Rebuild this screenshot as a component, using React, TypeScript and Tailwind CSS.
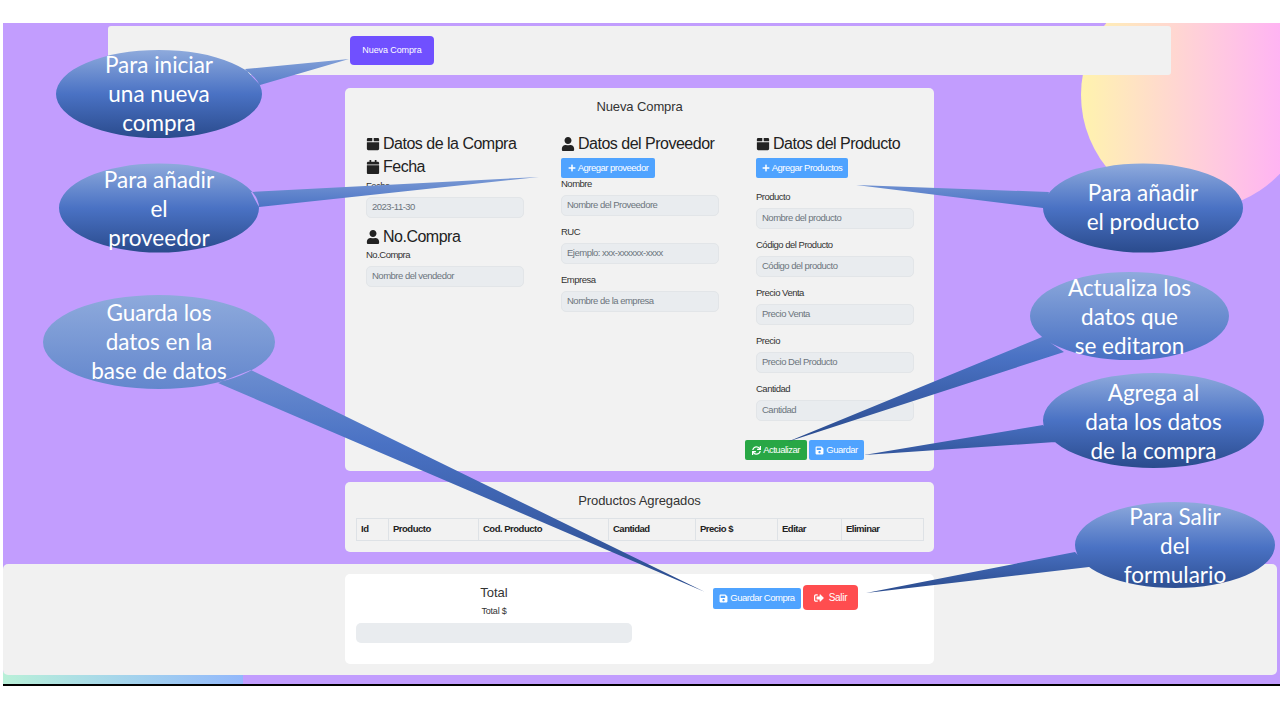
import { FaCalendar, FaPlus, FaSave, FaSignOutAlt, FaSync, FaUser } from 'react-icons/fa';
import type { ReactNode } from 'react';

const callouts = [
  {
    d: 'M56 94a103 44 0 1 0 206 0a103 44 0 1 0 -206 0zM245 69L349 59L260 85z',
    box: 'left-[56px] top-[50px] w-[206px]',
    lines: ['Para iniciar', 'una nueva', 'compra'],
  },
  {
    d: 'M59 208a100 44.500 0 1 0 200 0a100 44.500 0 1 0 -200 0zM251 192L539 177L259 207z',
    box: 'left-[59px] top-[165px] w-[200px]',
    lines: ['Para añadir', 'el', 'proveedor'],
  },
  {
    d: 'M43 342a116 47 0 1 0 232 0a116 47 0 1 0 -232 0zM251 370L705 592L218 383z',
    box: 'left-[43px] top-[298px] w-[232px]',
    lines: ['Guarda los', 'datos en la', 'base de datos'],
  },
  {
    d: 'M1043 208a100 44.500 0 1 0 200 0a100 44.500 0 1 0 -200 0zM1049 192L856 185L1043 208z',
    box: 'left-[1043px] top-[178px] w-[200px]',
    lines: ['Para añadir', 'el producto'],
  },
  {
    d: 'M1030 316a99.500 44 0 1 0 199 0a99.500 44 0 1 0 -199 0zM1042 337L787 442L1064 352z',
    box: 'left-[1031px] top-[273px] w-[197px]',
    lines: ['Actualiza los', 'datos que', 'se editaron'],
  },
  {
    d: 'M1043 420.500a110.500 47.500 0 1 0 221 0a110.500 47.500 0 1 0 -221 0zM1043 425L864 455L1055 442z',
    box: 'left-[1043px] top-[378px] w-[221px]',
    lines: ['Agrega al', 'data los datos', 'de la compra'],
  },
  {
    d: 'M1075 545a100 43 0 1 0 200 0a100 43 0 1 0 -200 0zM1075 552L866 593L1089 567z',
    box: 'left-[1075px] top-[502px] w-[200px]',
    lines: ['Para Salir', 'del', 'formulario'],
  },
];

function BoxIcon() {
  return (
    <svg viewBox="0 0 16 16" width="14" height="14" fill="currentColor">
      <path d="M2.500 1h4.700v3.800H1V2.500A1.500 1.500 0 0 1 2.500 1zM8.800 1h4.700A1.500 1.500 0 0 1 15 2.500v2.300H8.800zM1 6h14v7.500a1.500 1.500 0 0 1-1.500 1.500h-11A1.500 1.500 0 0 1 1 13.500z" />
    </svg>
  );
}

function Field({ label, placeholder, value }: { label: string; placeholder?: string; value?: string }) {
  return (
    <div className="w-[158px]">
      <label className="block h-[12px] text-[9.500px] leading-[12px] tracking-[-0.5px] text-[#333]">{label}</label>
      <div className="mt-[5px] flex h-[21px] items-center rounded-[5px] border border-[#e2e5e8] bg-[#e9ecef] px-[5px] text-[9.500px] tracking-[-0.5px] text-[#6c757d]">
        {value ?? placeholder}
      </div>
    </div>
  );
}

function Heading({ icon, children }: { icon: ReactNode; children: ReactNode }) {
  return (
    <h3 className="flex h-[23px] items-center gap-[3px] text-[16px] tracking-[-0.5px] text-[#222]">
      <span className="text-[14px]">{icon}</span>
      {children}
    </h3>
  );
}

function Btn({ className, children }: { className: string; children: ReactNode }) {
  return (
    <button
      type="button"
      className={`flex items-center justify-center gap-[2px] whitespace-nowrap rounded-[2px] text-[9.500px] font-medium tracking-[-0.5px] text-white ${className}`}
    >
      {children}
    </button>
  );
}

const columns = [
  ['Id', 'w-[32px]'],
  ['Producto', 'w-[90px]'],
  ['Cod. Producto', 'w-[130px]'],
  ['Cantidad', 'w-[87px]'],
  ['Precio $', 'w-[82px]'],
  ['Editar', 'w-[64px]'],
  ['Eliminar', 'flex-1'],
];

export default function App() {
  return (
    <div className="relative h-[720px] w-[1280px] overflow-hidden bg-white pl-[3px] pt-[23px] font-['Liberation_Sans',sans-serif]">
      <div className="relative h-[663px] w-[1277px] overflow-hidden border-b-2 border-black bg-[#c29dfe] pt-[3px]">
        <div className="absolute left-[1078px] top-[-43px] h-[230px] w-[230px] rounded-full bg-gradient-to-r from-[#fff3ad] to-[#ffa8fb]" />
        <div className="absolute bottom-0 left-0 h-[12px] w-[240px] bg-gradient-to-r from-[#b9f0d8] to-[#93b8fb]" />

        <header className="relative ml-[105px] flex h-[49px] w-[1063px] items-center rounded-[3px] bg-[#f1f1f1] pl-[242px]">
          <button type="button" className="h-[29px] w-[84px] rounded-[4px] bg-[#7050ff] text-[9px] font-medium tracking-[-0.1px] text-white">
            Nueva Compra
          </button>
        </header>

        <section className="relative ml-[342px] mt-[13px] h-[383px] w-[589px] rounded-[5px] bg-[#f2f2f2] px-[21px] pt-[10px]">
          <h2 className="h-[17px] text-center text-[13px] leading-[17px] tracking-[-0.1px] text-[#333]">Nueva Compra</h2>
          <div className="mt-[17px] grid grid-cols-[195px_195px_158px]">
            <div>
              <Heading icon={<BoxIcon />}>Datos de la Compra</Heading>
              <Heading icon={<FaCalendar />}>Fecha</Heading>
              <div className="mt-[2px]">
                <Field label="Fecha" value="2023-11-30" />
              </div>
              <div className="mt-[7px]">
                <Heading icon={<FaUser />}>No.Compra</Heading>
              </div>
              <div className="mt-[1px]">
                <Field label="No.Compra" placeholder="Nombre del vendedor" />
              </div>
            </div>
            <div>
              <Heading icon={<FaUser />}>Datos del Proveedor</Heading>
              <Btn className="mt-[3px] h-[20px] w-[94px] bg-[#4fa3ff]">
                <FaPlus className="text-[8px]" />
                Agregar proveedor
              </Btn>
              <div className="flex flex-col gap-[10px]">
                <Field label="Nombre" placeholder="Nombre del Proveedore" />
                <Field label="RUC" placeholder="Ejemplo: xxx-xxxxxx-xxxx" />
                <Field label="Empresa" placeholder="Nombre de la empresa" />
              </div>
            </div>
            <div>
              <Heading icon={<BoxIcon />}>Datos del Producto</Heading>
              <Btn className="mt-[3px] h-[20px] w-[92px] bg-[#4fa3ff]">
                <FaPlus className="text-[8px]" />
                Agregar Productos
              </Btn>
              <div className="mt-[13px] flex flex-col gap-[10px]">
                <Field label="Producto" placeholder="Nombre del producto" />
                <Field label="Código del Producto" placeholder="Código del producto" />
                <Field label="Precio Venta" placeholder="Precio Venta" />
                <Field label="Precio" placeholder="Precio Del Producto" />
                <Field label="Cantidad" placeholder="Cantidad" />
              </div>
            </div>
          </div>
          <div className="ml-[379px] mt-[19px] flex gap-[2px]">
            <Btn className="h-[20px] w-[62px] bg-[#28a745]">
              <FaSync className="text-[9px]" />
              Actualizar
            </Btn>
            <Btn className="h-[20px] w-[55px] bg-[#4fa3ff]">
              <FaSave className="text-[9px]" />
              Guardar
            </Btn>
          </div>
        </section>

        <section className="relative ml-[342px] mt-[11px] h-[70px] w-[589px] rounded-[5px] bg-[#f2f2f2] px-[11px] pt-[10px]">
          <h2 className="h-[17px] text-center text-[13px] leading-[17px] tracking-[-0.1px] text-[#333]">Productos Agregados</h2>
          <div className="mt-[9px] flex h-[23px] w-[568px] border border-[#dee2e6]">
            {columns.map(([name, width]) => (
              <div
                key={name}
                className={`flex items-center border-r border-[#dee2e6] pl-[4px] text-[9.500px] font-bold tracking-[-0.5px] text-[#222] last:border-r-0 ${width}`}
              >
                {name}
              </div>
            ))}
          </div>
        </section>

        <footer className="relative mt-[12px] h-[111px] w-[1274px] rounded-[5px] bg-[#f1f1f1] pl-[342px] pt-[10px]">
          <div className="flex h-[90px] w-[589px] rounded-[5px] bg-white px-[11px] pt-[10px]">
            <div className="w-[276px] text-center">
              <h2 className="h-[17px] text-[13px] leading-[17px] text-[#333]">Total</h2>
              <p className="mt-[4px] h-[12px] text-[9px] leading-[12px] tracking-[-0.2px] text-[#333]">Total $</p>
              <div className="mt-[6px] h-[20px] rounded-[5px] bg-[#e9ecef]" />
            </div>
            <div className="ml-[81px] flex h-[26px] gap-[2px] pt-[1px]">
              <Btn className="mt-[3px] h-[21px] w-[88px] bg-[#4fa3ff]">
                <FaSave className="text-[9px]" />
                Guardar Compra
              </Btn>
              <button type="button" className="flex h-[25px] w-[55px] items-center justify-center gap-[5px] rounded-[4px] bg-[#ff4d4f] text-[10px] tracking-[-0.3px] text-white">
                <FaSignOutAlt className="text-[10px]" />
                Salir
              </button>
            </div>
          </div>
        </footer>
      </div>

      {/* callouts pasted over the screenshot */}
      <svg className="absolute left-0 top-0" width="1280" height="720" viewBox="0 0 1280 720">
        <defs>
          <linearGradient id="callout" x1="0" y1="0" x2="0" y2="1">
            <stop offset="0" stopColor="#8eaadc" />
            <stop offset="0.5" stopColor="#4a72c4" />
            <stop offset="1" stopColor="#2a4b8d" />
          </linearGradient>
        </defs>
        {callouts.map((c) => (
          <path key={c.d} d={c.d} fill="url(#callout)" />
        ))}
      </svg>
      {callouts.map((c) => (
        <div key={c.box} className={`absolute text-center font-['Lato',sans-serif] text-[22.500px] leading-[29px] text-white ${c.box}`}>
          {c.lines.map((line) => (
            <div key={line}>{line}</div>
          ))}
        </div>
      ))}
    </div>
  );
}
